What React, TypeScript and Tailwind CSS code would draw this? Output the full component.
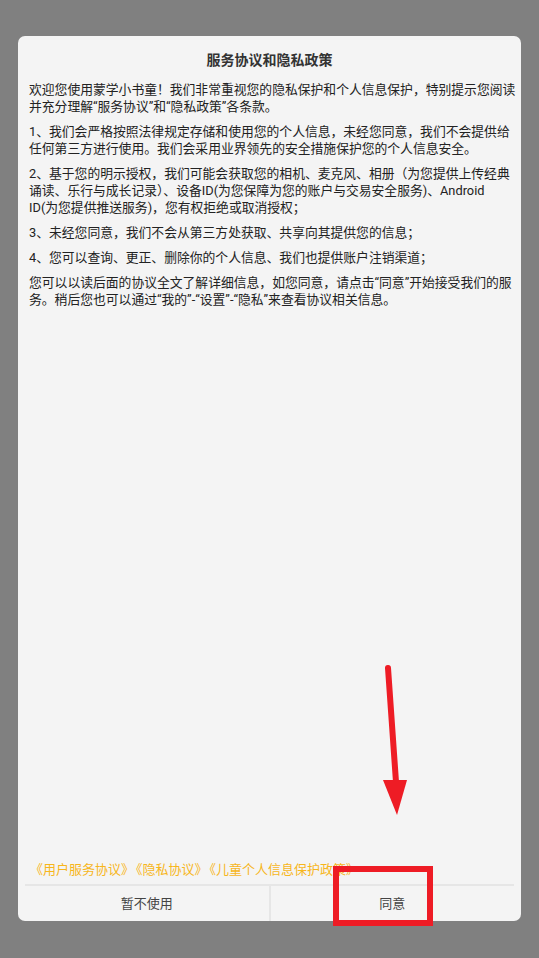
import React from "react";

const paragraphs: React.ReactNode[] = [
  "欢迎您使用蒙学小书童！我们非常重视您的隐私保护和个人信息保护，特别提示您阅读并充分理解“服务协议”和“隐私政策”各条款。",
  "1、我们会严格按照法律规定存储和使用您的个人信息，未经您同意，我们不会提供给任何第三方进行使用。我们会采用业界领先的安全措施保护您的个人信息安全。",
  <>
    2、基于您的明示授权，我们可能会获取您的相机、麦克风、相册（为您提供上传经典诵读、乐行与成长记录）、设备ID(为您保障为您的账户与交易安全服务)、Android{" "}
    <span className="whitespace-nowrap">ID(为您提供推送服务)</span>
    ，您有权拒绝或取消授权；
  </>,
  "3、未经您同意，我们不会从第三方处获取、共享向其提供您的信息；",
  "4、您可以查询、更正、删除你的个人信息、我们也提供账户注销渠道；",
  "您可以以读后面的协议全文了解详细信息，如您同意，请点击“同意”开始接受我们的服务。稍后您也可以通过“我的”-“设置”-“隐私”来查看协议相关信息。",
];

const links = ["《用户服务协议》", "《隐私协议》", "《儿童个人信息保护政策》"];

export default function App() {
  return (
    <div
      className="min-h-screen bg-[#808080] pt-[36px] px-[18px]"
      style={{ fontFamily: 'Roboto, "Noto Sans CJK SC", sans-serif' }}
    >
      <div className="relative flex h-[885px] flex-col rounded-[7px] bg-[#f4f4f4]">
        {/* title */}
        <h1 className="pt-[14px] text-center text-[14px] font-bold leading-[20px] text-[#333333]">
          服务协议和隐私政策
        </h1>

        {/* body */}
        <div className="mt-[11px] flex flex-1 flex-col gap-[8px] pl-[11px] pr-[4px] text-[12.8px] leading-[17px] text-[#222222]">
          {paragraphs.map((p, i) => (
            <p key={i}>{p}</p>
          ))}
        </div>

        {/* links */}
        <div className="pl-[12px] pb-[6px] text-[13px] leading-[17px] text-[#f7b61c] whitespace-nowrap">
          {links.map((l, i) => (
            <span key={l} className={i > 0 ? "ml-[2px]" : ""}>
              {l}
            </span>
          ))}
        </div>

        {/* buttons */}
        <div className="mx-[7px] flex h-[37px] border-t-2 border-[#e6e6e6]">
          <button className="flex-1 text-[13px] text-[#444444]">暂不使用</button>
          <div className="w-[2px] bg-[#e6e6e6]" />
          <button className="flex-1 text-[13px] text-[#444444]">同意</button>
        </div>

        {/* annotation: arrow */}
        <svg
          className="pointer-events-none absolute left-0 top-0"
          width="503"
          height="900"
          viewBox="0 0 503 900"
        >
          <line
            x1="370"
            y1="632"
            x2="378"
            y2="746"
            stroke="#ee1c25"
            strokeWidth="6"
            strokeLinecap="round"
          />
          <polygon points="365,744 389,744 379,779" fill="#ee1c25" />
        </svg>

        {/* annotation: box */}
        <div className="pointer-events-none absolute left-[315px] top-[830px] h-[60px] w-[100px] border-[6px] border-[#ee1c25]" />
      </div>
    </div>
  );
}
